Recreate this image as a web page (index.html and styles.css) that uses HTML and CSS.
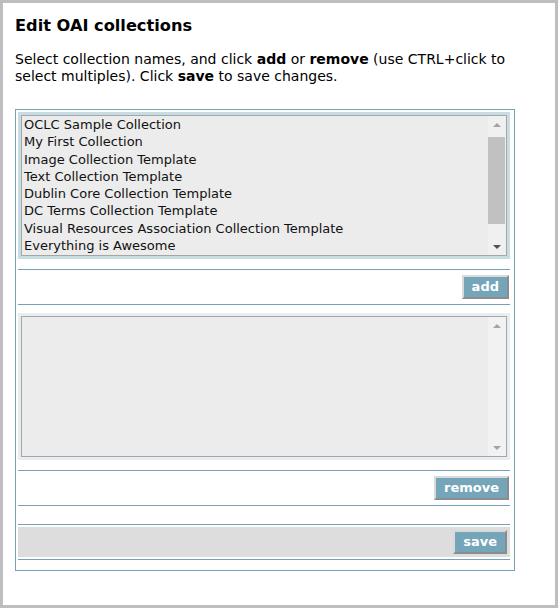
FILE: index.html
```html
<!DOCTYPE html>
<html>
<head>
<meta charset="utf-8">
<title>Edit OAI collections</title>
<link rel="stylesheet" href="styles.css">
</head>
<body>
<div class="page">
  <h1 class="title">Edit OAI collections</h1>
  <p class="intro">Select collection names, and click <b>add</b> or <b>remove</b> (use CTRL+click to select multiples). Click <b>save</b> to save changes.</p>
  <div class="box">
    <div class="ring ring-active">
      <div class="list">
        <div class="items">
          <div class="item">OCLC Sample Collection</div>
          <div class="item">My First Collection</div>
          <div class="item">Image Collection Template</div>
          <div class="item">Text Collection Template</div>
          <div class="item">Dublin Core Collection Template</div>
          <div class="item">DC Terms Collection Template</div>
          <div class="item">Visual Resources Association Collection Template</div>
          <div class="item">Everything is Awesome</div>
        </div>
        <div class="scrollbar">
          <div class="arrow"><span class="tri-up tri-off"></span></div>
          <div class="thumb"></div>
          <div class="spacer"></div>
          <div class="arrow"><span class="tri-down tri-on"></span></div>
        </div>
      </div>
    </div>
    <div class="btnrow btnrow-first">
      <button class="btn">add</button>
    </div>
    <div class="ring ring-idle">
      <div class="list">
        <div class="items"></div>
        <div class="scrollbar scrollbar-idle">
          <div class="arrow"><span class="tri-up tri-off"></span></div>
          <div class="spacer"></div>
          <div class="arrow"><span class="tri-down tri-off"></span></div>
        </div>
      </div>
    </div>
    <div class="btnrow btnrow-second">
      <button class="btn">remove</button>
    </div>
    <div class="savewrap">
      <div class="savebar">
        <button class="btn">save</button>
      </div>
    </div>
  </div>
</div>
</body>
</html>
```

FILE: styles.css
```css
html, body {
  margin: 0;
  padding: 0;
}
body {
  background: #bebebe;
  font-family: "DejaVu Sans", Verdana, sans-serif;
  color: #000;
}
.page {
  margin: 3px;
  height: 602px;
  box-sizing: border-box;
  background: #fff;
  padding: 13px 0 0 12px;
}
.title {
  margin: 0;
  font-size: 16.2px;
  line-height: 19px;
  font-weight: bold;
}
.intro {
  margin: 16px 0 0 0;
  font-size: 14px;
  line-height: 17px;
  width: 510px;
}
.box {
  margin-top: 24px;
  width: 500px;
  box-sizing: border-box;
  border: 1px solid #72a3b6;
  padding: 2px 4px 10px 2px;
}
.ring {
  padding: 3px;
}
.ring-active {
  background: #c8dce3;
}
.ring-idle {
  background: #e6eef1;
  margin-top: 8px;
}
.list {
  display: flex;
  height: 139px;
  border: 1px solid #a6a6a6;
  background: #ececec;
}
.items {
  flex: 1;
  padding-left: 2px;
}
.item {
  font-size: 13px;
  line-height: 17.3px;
  color: #111;
  white-space: nowrap;
}
.scrollbar {
  width: 18px;
  display: flex;
  flex-direction: column;
  background: #f0f0f0;
}
.scrollbar-idle {
  background: #f2f2f2;
}
.arrow {
  height: 17px;
  display: flex;
  align-items: center;
  justify-content: center;
}
.thumb {
  margin-top: 4px;
  height: 87px;
  width: 17px;
  background: #c1c1c1;
}
.spacer {
  flex: 1;
}
.tri-up, .tri-down {
  width: 0;
  height: 0;
  border-left: 4px solid transparent;
  border-right: 4px solid transparent;
}
.tri-up {
  border-bottom: 4px solid #a3a3a3;
}
.tri-down {
  border-top: 4px solid #a3a3a3;
}
.tri-up.tri-off { border-bottom-color: #a3a3a3; }
.tri-down.tri-off { border-top-color: #a3a3a3; }
.tri-down.tri-on { border-top-color: #4f4f4f; }
.btnrow {
  height: 34px;
  border-top: 1px solid #72a3b6;
  border-bottom: 1px solid #72a3b6;
  display: flex;
  justify-content: flex-end;
  align-items: center;
  padding-right: 1px;
}
.btnrow-first {
  margin-top: 10px;
}
.btnrow-second {
  margin-top: 10px;
}
.savewrap {
  margin-top: 18px;
  border-top: 1px solid #72a3b6;
  border-bottom: 1px solid #72a3b6;
  padding: 2px 0;
}
.savebar {
  height: 30px;
  background: #dddddd;
  display: flex;
  justify-content: flex-end;
  align-items: center;
  padding-right: 3px;
}
.btn {
  height: 24px;
  box-sizing: border-box;
  margin: 0;
  padding: 0 8px;
  background: #74a5b9;
  color: #fff;
  font-family: "DejaVu Sans", Verdana, sans-serif;
  font-weight: bold;
  font-size: 13px;
  line-height: 18px;
  border: 2px solid;
  border-color: #dadada #8c8c8c #8c8c8c #dadada;
  cursor: pointer;
}
```
